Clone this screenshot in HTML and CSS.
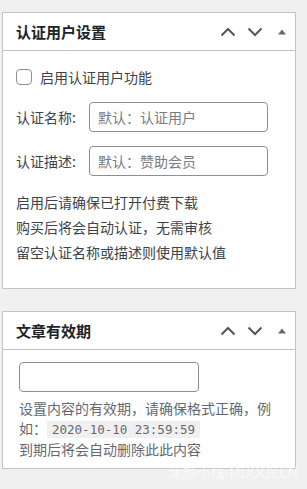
FILE: index.html
```html
<!DOCTYPE html>
<html lang="zh-CN">
<head>
    <meta charset="UTF-8">
    <meta name="viewport" content="width=device-width, initial-scale=1.0">
    <title>认证用户设置</title>
    <link rel="stylesheet" href="styles.css">
</head>
<body>

<div class="postbox">
    <div class="postbox-header">
        <h2>认证用户设置</h2>
        <div class="handle-actions">
            <button class="handle"><svg width="16" height="10" viewBox="0 0 16 10"><path d="M1.5 8.5 L8 2 L14.5 8.5" /></svg></button>
            <button class="handle"><svg width="16" height="10" viewBox="0 0 16 10"><path d="M1.5 1.5 L8 8 L14.5 1.5" /></svg></button>
            <button class="handle"><svg class="tri" width="10" height="6" viewBox="0 0 10 6"><polygon points="1,5.5 5,0.5 9,5.5" /></svg></button>
        </div>
    </div>
    <div class="inside">
        <label class="check-row">
            <input type="checkbox" class="checkbox">
            <span>启用认证用户功能</span>
        </label>
        <div class="field-row">
            <span class="field-label">认证名称:</span>
            <input type="text" class="text-input" placeholder="默认：认证用户">
        </div>
        <div class="field-row">
            <span class="field-label">认证描述:</span>
            <input type="text" class="text-input" placeholder="默认：赞助会员">
        </div>
        <div class="notes">
            <p>启用后请确保已打开付费下载</p>
            <p>购买后将会自动认证，无需审核</p>
            <p>留空认证名称或描述则使用默认值</p>
        </div>
    </div>
</div>

<div class="postbox">
    <div class="postbox-header">
        <h2>文章有效期</h2>
        <div class="handle-actions">
            <button class="handle"><svg width="16" height="10" viewBox="0 0 16 10"><path d="M1.5 8.5 L8 2 L14.5 8.5" /></svg></button>
            <button class="handle"><svg width="16" height="10" viewBox="0 0 16 10"><path d="M1.5 1.5 L8 8 L14.5 1.5" /></svg></button>
            <button class="handle"><svg class="tri" width="10" height="6" viewBox="0 0 10 6"><polygon points="1,5.5 5,0.5 9,5.5" /></svg></button>
        </div>
    </div>
    <div class="inside inside-expire">
        <input type="text" class="text-input date-input">
        <p class="description">设置内容的有效期，请确保格式正确，例如：<code>2020-10-10 23:59:59</code><br>到期后将会自动删除此此内容</p>
    </div>
</div>

<div class="watermark">沐颜小栈-MUOOY.CN</div>

</body>
</html>
```

FILE: styles.css
```css
* {box-sizing: border-box; margin: 0; padding: 0;}
body {
    font-family: "Noto Sans CJK SC", "Noto Sans", sans-serif;
    font-size: 14px;
    background: #f0f0f1;
    color: #3c434a;
    padding: 12px 0 0 2px;
    position: relative;
    min-height: 489px;
}

.postbox {
    width: 294px;
    background: #fff;
    border: 1px solid #c3c4c7;
    margin-bottom: 22px;
}

.postbox-header {
    display: flex;
    justify-content: space-between;
    align-items: center;
    height: 38px;
    border-bottom: 1px solid #c3c4c7;
}

.postbox-header h2 {
    font-size: 15px;
    font-weight: bold;
    color: #1d2327;
    padding-left: 13px;
    line-height: 20px;
}

.handle-actions {
    display: flex;
}

.handle {
    width: 27px;
    height: 36px;
    border: none;
    background: none;
    display: flex;
    align-items: center;
    justify-content: center;
}

.handle path {
    fill: none;
    stroke: #50575e;
    stroke-width: 2;
}

.handle .tri {
    fill: #646970;
}

.inside {
    padding: 18px 13px 23px;
}

.check-row {
    display: flex;
    align-items: center;
    gap: 8px;
    height: 16px;
    line-height: 16px;
    margin-bottom: 17px;
}

.checkbox {
    appearance: none;
    width: 16px;
    height: 16px;
    border: 1px solid #8c8f94;
    border-radius: 4px;
    background: #fff;
}

.field-row {
    display: flex;
    align-items: center;
    margin-bottom: 14px;
}

.field-label {
    width: 73px;
    line-height: 20px;
}

.text-input {
    width: 179px;
    height: 30px;
    border: 1px solid #8c8f94;
    border-radius: 4px;
    padding: 0 8px;
    font-family: inherit;
    font-size: 14px;
    color: #2c3338;
    background: #fff;
}

.text-input::placeholder {
    color: #787c82;
}

.notes p {
    line-height: 25px;
}

.inside-expire {
    padding: 12px 16px 9px 16px;
}

.date-input {
    width: 180px;
    height: 30px;
    display: block;
    margin-bottom: 6px;
}

.description {
    color: #646970;
    line-height: 20px;
}

.description code {
    font-family: "DejaVu Sans Mono", "Liberation Mono", monospace;
    font-size: 12.5px;
    line-height: 18px;
    background: #f0f0f1;
    padding: 1px 5px;
}

.watermark {
    position: absolute;
    right: 9px;
    top: 462px;
    color: rgba(255, 255, 255, 0.9);
    font-size: 14px;
    font-weight: 300;
    line-height: 20px;
}
```
